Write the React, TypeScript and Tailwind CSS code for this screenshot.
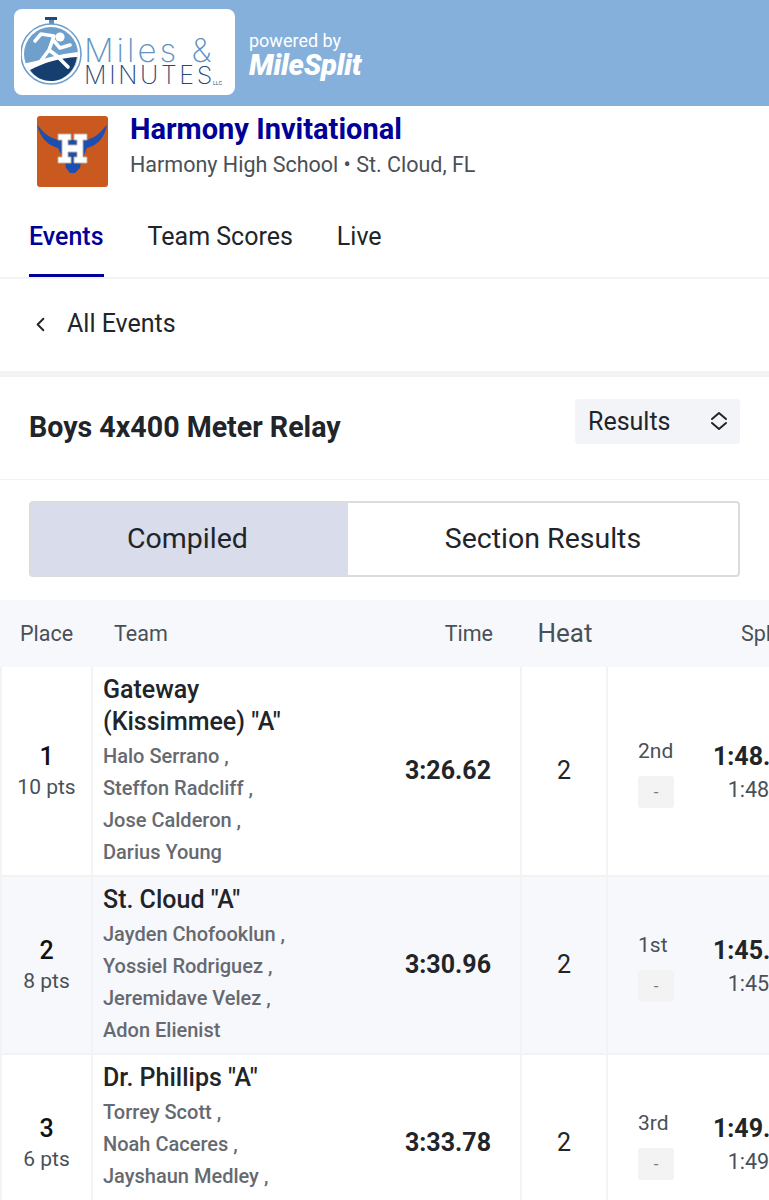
import { ChevronLeft } from 'lucide-react';

const results = [
  {
    place: 1,
    pts: '10 pts',
    team: ['Gateway', '(Kissimmee) "A"'],
    athletes: ['Halo Serrano ,', 'Steffon Radcliff ,', 'Jose Calderon ,', 'Darius Young'],
    time: '3:26.62',
    rank: '2nd',
    split: '1:48.21',
    lap: '1:48.21',
    height: 'h-[210px]',
    bg: 'bg-white',
  },
  {
    place: 2,
    pts: '8 pts',
    team: ['St. Cloud "A"'],
    athletes: ['Jayden Chofooklun ,', 'Yossiel Rodriguez ,', 'Jeremidave Velez ,', 'Adon Elienist'],
    time: '3:30.96',
    rank: '1st',
    split: '1:45.32',
    lap: '1:45.32',
    height: 'h-[178px]',
    bg: 'bg-[#f7f8fc]',
  },
  {
    place: 3,
    pts: '6 pts',
    team: ['Dr. Phillips "A"'],
    athletes: ['Torrey Scott ,', 'Noah Caceres ,', 'Jayshaun Medley ,', 'Andre Richards'],
    time: '3:33.78',
    rank: '3rd',
    split: '1:49.10',
    lap: '1:49.10',
    height: 'h-[178px]',
    bg: 'bg-white',
  },
];

function StopwatchLogo() {
  return (
    <svg width="62" height="72" viewBox="0 0 62 72" className="shrink-0">
      <rect x="24" y="0" width="12" height="3" fill="#1f4a7a" />
      <rect x="28" y="3" width="5" height="5" fill="#5b8fc0" />
      <circle cx="30" cy="37" r="30" fill="#fff" stroke="#6f9fcb" strokeWidth="1.6" />
      <circle cx="30" cy="37" r="27" fill="#6f9fcb" />
      <path d="M5 48 C20 42 38 37 57 35 C57 52 44 64 30 64 C19 64 10 57 5 48 Z" fill="#fff" />
      <path d="M9 53 C22 46 38 41 56 40 C54 54 43 64 30 64 C21 64 14 60 9 53 Z" fill="#163f70" />
      <circle cx="39" cy="20" r="4.6" fill="#fff" />
      <path
        d="M14 24 L20 17 L33 19 L28 33 L36 39 L47 50 M33 24 L39 31 L49 28 M28 33 L19 45 L5 48"
        fill="none"
        stroke="#fff"
        strokeWidth="3.6"
        strokeLinecap="round"
        strokeLinejoin="round"
      />
    </svg>
  );
}

function HarmonyLogo() {
  return (
    <div className="w-[71px] h-[71px] rounded-[3px] bg-[#c9591f] shrink-0">
      <svg width="71" height="71" viewBox="0 0 71 71">
        <path
          d="M0 9 C5 13 7 20 21 24 L50 24 C63 20 65 13 70 9 C68 20 62 29 50 32 L44 46 L43 52 L38 57 L33 57 L29 52 L28 46 L21 32 C9 29 3 20 0 9 Z"
          fill="#1f4fae"
        />
        <path
          d="M21 18 H34 V24 H31 V29 H40 V24 H37 V18 H50 V24 H46 V41 H50 V47 H37 V41 H40 V36 H31 V41 H34 V47 H21 V41 H25 V24 H21 Z"
          fill="#fff"
          stroke="#b9b2ac"
          strokeWidth="1"
        />
      </svg>
    </div>
  );
}

export default function App() {
  return (
    <div className="w-[769px] h-[1200px] overflow-hidden bg-white font-['Roboto',sans-serif] text-[#212529]">
      {/* Sponsor banner */}
      <div className="h-[106px] bg-[#85b0db] flex items-start pl-[14px] pt-[9px] gap-[14px]">
        <div className="w-[221px] h-[86px] bg-white rounded-[8px] flex items-start pl-[7px] pt-[8px] gap-[1px]">
          <StopwatchLogo />
          <div className="pt-[19px] leading-none font-['Inter',sans-serif] font-extralight">
            <div className="text-[33px] leading-[28px] text-[#5f93c4] tracking-[3px] whitespace-nowrap">Miles &amp;</div>
            <div className="flex items-end">
              <span className="text-[25px] leading-[22px] text-[#1f4a7a] tracking-[2.7px]">MINUTES</span>
              <span className="text-[5px] font-normal text-[#1f4a7a] -ml-[2px]">LLC</span>
            </div>
          </div>
        </div>
        <div className="pt-[22px] text-white">
          <div className="text-[18px] leading-5">powered by</div>
          <div className="font-black italic text-[29px] leading-[28px] tracking-[-0.2px]">MileSplit</div>
        </div>
      </div>

      {/* Meet */}
      <div className="h-[104px] flex pl-[37px] pt-[10px] gap-[22px]">
        <HarmonyLogo />
        <div>
          <h1 className="text-[29px] leading-[26px] font-bold text-[#000099] whitespace-nowrap">Harmony Invitational</h1>
          <p className="mt-[11px] text-[21.5px] leading-6 text-[#495057]">Harmony High School • St. Cloud, FL</p>
        </div>
      </div>

      {/* Tabs */}
      <div className="h-[69px] flex gap-[44px] pl-[29px] border-b-2 border-[#f1f3f5]">
        <div className="h-[67px] border-b-[3px] border-[#000099] text-[25px] leading-[54px] font-medium text-[#000099]">Events</div>
        <div className="text-[25px] leading-[54px]">Team Scores</div>
        <div className="text-[25px] leading-[54px]">Live</div>
      </div>

      <div className="h-[90px] pb-[2px] flex items-center pl-[29px] gap-[15px] border-b-[6px] border-[#f3f3f3] box-content">
        <ChevronLeft size={23} strokeWidth={2} className="text-[#212529]" />
        <span className="text-[25px]">All Events</span>
      </div>

      {/* Event heading */}
      <div className="h-[103px] flex items-center justify-between pl-[29px] pr-[29px] border-b border-[#f1f3f5]">
        <h2 className="text-[28.6px] font-bold -mt-[2px]">Boys 4x400 Meter Relay</h2>
        <div className="w-[165px] h-[45px] -mt-[14px] bg-[#f3f4f8] rounded-[4px] flex items-center justify-between pl-[13px] pr-[12px]">
          <span className="text-[25px] pt-[2px]">Results</span>
          <svg width="18" height="20" viewBox="0 0 18 20" fill="none" stroke="#212529" strokeWidth="2" strokeLinecap="round" strokeLinejoin="round">
            <path d="M2 8 L9 2 L16 8 M2 12 L9 18 L16 12" />
          </svg>
        </div>
      </div>

      {/* Segmented control */}
      <div className="px-[29px] pt-[21px] pb-[23px]">
        <div className="h-[76px] flex border-2 border-[#dcdcdf] rounded-[4px] text-[28.5px]">
          <div className="w-[317px] pr-[4px] bg-[#d9dcea] flex items-center justify-center">Compiled</div>
          <div className="flex-1 flex items-center justify-center">Section Results</div>
        </div>
      </div>

      {/* Results table */}
      <div className="flex items-center h-[67px] pt-[1px] bg-[#f7f8fc] text-[#495057] text-[21.5px] whitespace-nowrap">
        <div className="w-[93px] shrink-0 pl-[20px]">Place</div>
        <div className="w-[429px] shrink-0 pl-[21px] pr-[29px] flex justify-between">
          <span>Team</span>
          <span>Time</span>
        </div>
        <div className="w-[86px] shrink-0 text-center text-[26px] -mt-[2px]">Heat</div>
        <div className="shrink-0 pl-[133px]">Splits</div>
      </div>

      {results.map((r) => (
        <div key={r.place} className={`flex ${r.height} ${r.bg} border-b-2 border-[#f1f3f5] overflow-hidden`}>
          <div className="w-[93px] shrink-0 pt-[2px] flex flex-col items-center justify-center border-x-2 border-[#f1f3f5]">
            <span className="text-[25px] leading-[30px] font-medium text-[#111]">{r.place}</span>
            <span className="text-[21px] leading-[30px] text-[#495057]">{r.pts}</span>
          </div>
          <div className="w-[429px] shrink-0 pl-[10px] pr-[29px] flex items-center justify-between border-r-2 border-[#f1f3f5]">
            <div className="self-start pt-[7px] whitespace-nowrap">
              {r.team.map((line) => (
                <div key={line} className="text-[25px] leading-[32px] font-medium">{line}</div>
              ))}
              <div className="mt-[2px]">
                {r.athletes.map((name) => (
                  <div key={name} className="text-[20px] leading-[32px] font-medium text-[#666a70]">{name}</div>
                ))}
              </div>
            </div>
            <span className="text-[25px] font-bold">{r.time}</span>
          </div>
          <div className="w-[86px] shrink-0 flex items-center justify-center text-[25px] border-r-2 border-[#f1f3f5]">2</div>
          <div className="pl-[30px] flex items-center gap-[39px] shrink-0 whitespace-nowrap">
            <div className="w-[36px] pt-[4px] flex flex-col gap-[13px] text-[#495057] text-[21px] leading-6">
              <span>{r.rank}</span>
              <span className="h-[32px] bg-[#f3f3f3] rounded-[3px] flex items-center justify-center text-[17px] text-[#777]">-</span>
            </div>
            <div className="w-[86px] pt-[4px] flex flex-col items-end text-right">
              <span className="text-[25px] leading-8 font-bold">{r.split}</span>
              <span className="text-[21.5px] leading-[33px] text-[#495057]">{r.lap}</span>
            </div>
          </div>
        </div>
      ))}
    </div>
  );
}
